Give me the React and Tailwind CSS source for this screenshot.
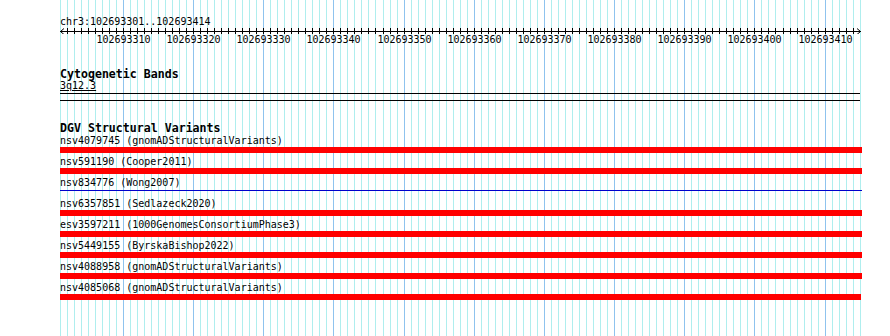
const START = 102693301;
const END = 102693414;
const LEFT = 60;
const SPAN = 800;
const BP = SPAN / (END - START + 1);

const tracks = [
  { name: "nsv4079745", source: "gnomADStructuralVariants", kind: "bar" },
  { name: "nsv591190", source: "Cooper2011", kind: "bar" },
  { name: "nsv834776", source: "Wong2007", kind: "line" },
  { name: "nsv6357851", source: "Sedlazeck2020", kind: "bar" },
  { name: "esv3597211", source: "1000GenomesConsortiumPhase3", kind: "bar" },
  { name: "nsv5449155", source: "ByrskaBishop2022", kind: "bar" },
  { name: "nsv4088958", source: "gnomADStructuralVariants", kind: "bar" },
  { name: "nsv4085068", source: "gnomADStructuralVariants", kind: "bar", short: true },
];

const px = (k) => Math.floor(LEFT + 0.2 + BP * k) + 0.5;

function Grid() {
  const lines = [];
  for (let k = 0; k <= END - START + 1; k++) {
    const major = (START + k) % 10 === 0;
    lines.push(
      <line
        key={k}
        x1={px(k)}
        x2={px(k)}
        y1={0}
        y2={336}
        stroke={major ? "#8fc3ee" : "#afeeee"}
        strokeWidth={1}
      />
    );
  }
  return (
    <svg className="absolute inset-0" width="890" height="336" shapeRendering="crispEdges">
      {lines}
    </svg>
  );
}

function Ruler() {
  const ticks = [];
  for (let k = 1; k <= END - START; k++) {
    ticks.push(<line key={k} x1={px(k)} x2={px(k)} y1={0} y2={6} stroke="#000" />);
  }
  return (
    <svg className="block -ml-[60px]" width="870" height="6" shapeRendering="crispEdges">
      <line x1={60} x2={861} y1={3.5} y2={3.5} stroke="#000" />
      {ticks}
      <polyline points="64,0.5 60.5,3.5 64,6.5" fill="none" stroke="#000" shapeRendering="auto" />
      <polyline points="857,0.5 860.5,3.5 857,6.5" fill="none" stroke="#000" shapeRendering="auto" />
    </svg>
  );
}

export default function App() {
  const labels = [];
  for (let b = START; b <= END; b++) {
    if (b % 10 === 0) labels.push(b);
  }

  return (
    <div className="relative w-[890px] h-[336px] overflow-hidden bg-white text-black font-['DejaVu_Sans_Mono','Liberation_Mono',monospace]">
      <Grid />
      <div className="relative pl-[60px] pt-[16px] w-[862px]">
        <div className="text-[10px] leading-[12px] h-[12px]">chr3:102693301..102693414</div>
        <Ruler />
        <div className="relative h-[12px] text-[10px] leading-[12px]">
          {labels.map((b) => (
            <span
              key={b}
              className="absolute top-0 -translate-x-1/2"
              style={{ left: px(b - START) - LEFT }}
            >
              {b}
            </span>
          ))}
        </div>

        <div className="mt-[22px] text-[11.6px] leading-[12px] font-bold">Cytogenetic Bands</div>
        <div className="text-[10px] leading-[12px] underline underline-offset-[1px]">3q12.3</div>
        <div className="mt-[1px] h-px w-[800px] bg-black" />
        <div className="mt-[6px] h-px w-[800px] bg-black" />

        <div className="mt-[21px] text-[11.6px] leading-[12px] font-bold">DGV Structural Variants</div>
        <div className="mt-px flex flex-col">
          {tracks.map((t) => (
            <div key={t.name} className="h-[21px] flex flex-col">
              <div className="text-[10px] leading-[12px] h-[12px] whitespace-pre">
                {t.name} ({t.source})
              </div>
              {t.kind === "bar" ? (
                <div className={`h-[6px] bg-[#ff0000] ${t.short ? "w-[801px]" : "w-[802px]"}`} />
              ) : (
                <div className="h-[6px] pt-px">
                  <div className="h-px w-[802px] bg-[#0000cc]" />
                </div>
              )}
            </div>
          ))}
        </div>
      </div>
    </div>
  );
}
